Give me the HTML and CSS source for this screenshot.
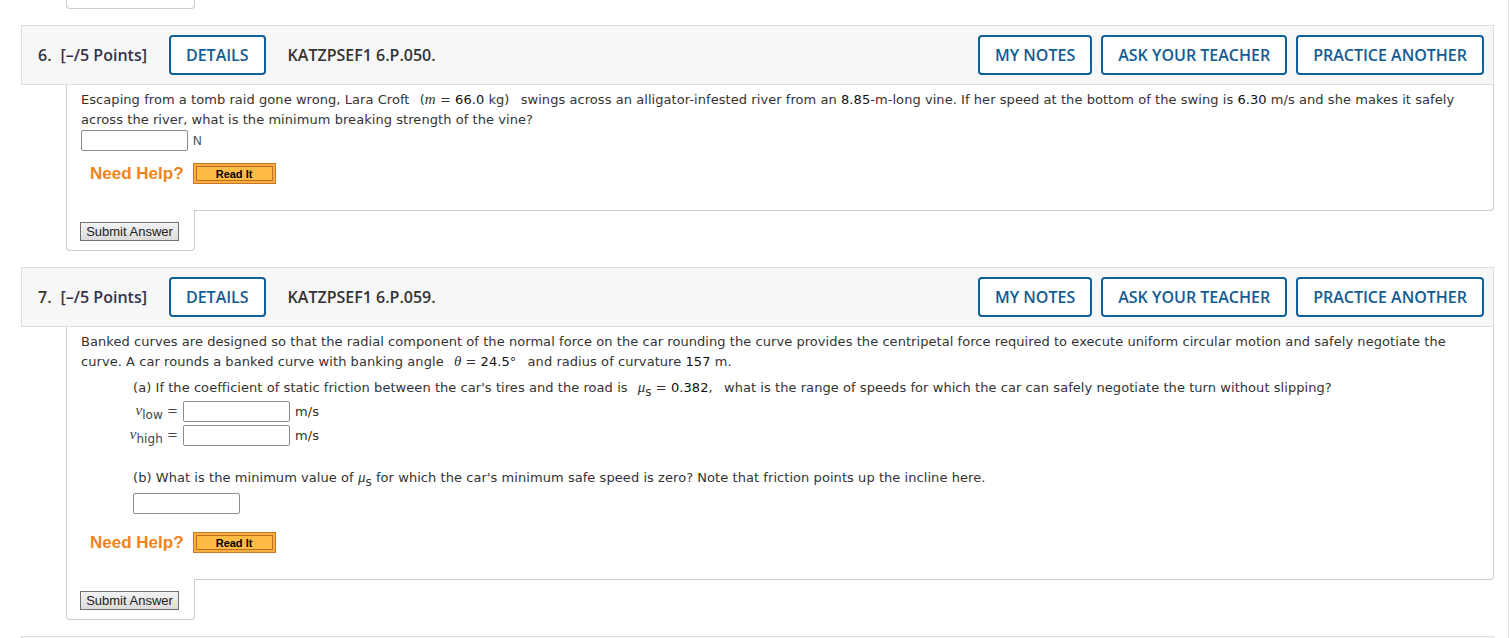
FILE: index.html
```html
<!DOCTYPE html>
<html lang="en">
<head>
<meta charset="utf-8">
<title>Questions</title>
<link rel="stylesheet" href="styles.css">
</head>
<body>
<div class="page">
  <div class="prev-tab"></div>

  <section class="question">
    <header class="q-head">
      <span class="q-num">6.</span>
      <span class="q-points">[–/5 Points]</span>
      <button class="q-btn q-details">DETAILS</button>
      <span class="q-code">KATZPSEF1 6.P.050.</span>
      <div class="q-actions">
        <button class="q-btn">MY NOTES</button>
        <button class="q-btn">ASK YOUR TEACHER</button>
        <button class="q-btn">PRACTICE ANOTHER</button>
      </div>
    </header>
    <div class="q-body">
      <p class="q-text">Escaping from a tomb raid gone wrong, Lara Croft <span class="math">(<span class="mi">m</span> = <span class="val">66.0</span> kg)</span> swings across an alligator-infested river from an <span class="val">8.85</span>-m-long vine. If her speed at the bottom of the swing is <span class="val">6.30</span> m/s and she makes it safely across the river, what is the minimum breaking strength of the vine?</p>
      <div class="answer-row">
        <input class="ans-box" type="text">
        <span class="unit-n">N</span>
      </div>
      <div class="help help-q6">
        <span class="help-label">Need Help?</span>
        <span class="read-it"><span class="read-it-inner">Read It</span></span>
      </div>
    </div>
    <div class="submit-tab"><button class="submit">Submit Answer</button></div>
  </section>

  <section class="question">
    <header class="q-head">
      <span class="q-num">7.</span>
      <span class="q-points">[–/5 Points]</span>
      <button class="q-btn q-details">DETAILS</button>
      <span class="q-code">KATZPSEF1 6.P.059.</span>
      <div class="q-actions">
        <button class="q-btn">MY NOTES</button>
        <button class="q-btn">ASK YOUR TEACHER</button>
        <button class="q-btn">PRACTICE ANOTHER</button>
      </div>
    </header>
    <div class="q-body">
      <p class="q-text">Banked curves are designed so that the radial component of the normal force on the car rounding the curve provides the centripetal force required to execute uniform circular motion and safely negotiate the curve. A car rounds a banked curve with banking angle <span class="math"><span class="mi">θ</span> = <span class="val">24.5</span>°</span> and radius of curvature <span class="val">157</span> m.</p>
      <div class="part">
        <p class="part-text">(a) If the coefficient of static friction between the car's tires and the road is <span class="math"><span class="mi">μ</span><sub class="sub">s</sub> = <span class="val">0.382</span>,</span> what is the range of speeds for which the car can safely negotiate the turn without slipping?</p>
        <div class="var-grid">
          <span class="var-label"><span class="mi">v</span><sub class="sub">low</sub> =</span>
          <input class="ans-box" type="text">
          <span class="unit">m/s</span>
          <span class="var-label"><span class="mi">v</span><sub class="sub">high</sub> =</span>
          <input class="ans-box" type="text">
          <span class="unit">m/s</span>
        </div>
      </div>
      <div class="part part-b">
        <p class="part-text">(b) What is the minimum value of <span class="mi">μ</span><sub class="sub">s</sub> for which the car's minimum safe speed is zero? Note that friction points up the incline here.</p>
        <input class="ans-box ans-b" type="text">
      </div>
      <div class="help help-q7">
        <span class="help-label">Need Help?</span>
        <span class="read-it"><span class="read-it-inner">Read It</span></span>
      </div>
    </div>
    <div class="submit-tab"><button class="submit">Submit Answer</button></div>
  </section>

  <section class="question">
    <header class="q-head q-head-next"></header>
  </section>
</div>
</body>
</html>
```

FILE: styles.css
```css
* { box-sizing: border-box; }

html, body {
  margin: 0;
  padding: 0;
  background: #ffffff;
}

body {
  font-family: "DejaVu Sans", Verdana, sans-serif;
  font-size: 13px;
  color: #333333;
  overflow: hidden;
}

.page {
  width: 1509px;
  height: 638px;
  border-right: 1px solid #e4e4e4;
  overflow: hidden;
}

.prev-tab {
  margin-left: 66px;
  width: 129px;
  height: 9px;
  border: 1px solid #cccccc;
  border-top: none;
  border-radius: 0 0 4px 4px;
}

.question {
  margin-top: 16px;
  margin-left: 21px;
  width: 1473px;
}

/* header bar */
.q-head {
  display: flex;
  align-items: center;
  height: 60px;
  padding: 9px 9px 9px 16px;
  background: #f7f7f7;
  border: 1px solid #dddddd;
  font-family: "Open Sans", "DejaVu Sans", sans-serif;
  font-size: 16px;
  font-weight: 600;
  color: #333333;
}

.q-num { margin-right: 9px; }

.q-points { color: #33334a; }

.q-code { margin-left: 22px; }

.q-details { margin-left: 22px; }

.q-actions {
  margin-left: auto;
  display: flex;
  gap: 9px;
}

.q-btn {
  height: 40px;
  padding: 0 15px;
  border: 2px solid #0f619b;
  border-radius: 4px;
  background: #ffffff;
  color: #135c92;
  font-family: "Open Sans", "DejaVu Sans", sans-serif;
  font-size: 16px;
  font-weight: 600;
  line-height: 36px;
}

/* body box */
.q-body {
  margin-left: 45px;
  padding: 5px 15px 26px 14px;
  border: 1px solid #cccccc;
  border-top: none;
  border-radius: 0 0 4px 0;
  letter-spacing: 0.06px;
}

.q-text, .part-text {
  margin: 0;
  line-height: 20px;
}

.val { color: #111111; }

.math { margin: 0 7px 0 6px; }

.mi {
  font-family: "Liberation Serif", "Times New Roman", serif;
  font-style: italic;
  font-size: 15px;
  line-height: 1;
  letter-spacing: 0;
}

.sub {
  font-size: 12px;
  line-height: 0;
  vertical-align: -4px;
}

.answer-row {
  display: flex;
  align-items: center;
  height: 21px;
}

.ans-box {
  width: 107px;
  height: 21px;
  margin: 0;
  padding: 0 3px;
  border: 1px solid #8d8d8d;
  border-radius: 2px;
  background: #ffffff;
  font: inherit;
}

.unit-n {
  margin-left: 5px;
  font-family: "Liberation Sans", Arial, sans-serif;
  font-size: 12px;
  color: #444444;
}

.unit { margin-left: 5px; }

.part {
  margin-left: 52px;
}

.part-text { margin-top: 6px; }

.var-grid {
  display: grid;
  grid-template-columns: 50px auto 1fr;
  grid-auto-rows: 24px;
  align-items: center;
  margin-top: 1px;
}

.var-label {
  justify-self: end;
  margin-right: 5px;
  white-space: nowrap;
  color: #444444;
  line-height: 20px;
}

.part-b .part-text { margin-top: 21px; }

.ans-b {
  display: block;
  margin-top: 5px;
}

/* help */
.help {
  display: flex;
  align-items: center;
  height: 21px;
  padding-left: 9px;
  letter-spacing: 0;
}

.help-q6 { margin-top: 12px; }
.help-q7 { margin-top: 18px; }

.help-label {
  font-family: "Liberation Sans", Arial, sans-serif;
  font-size: 17px;
  font-weight: bold;
  color: #f0841a;
  margin-right: 9px;
}

.read-it {
  display: inline-flex;
  width: 83px;
  height: 21px;
  padding: 2px;
  border: 1px solid #c8782a;
  background: #fcae3c;
}

.read-it-inner {
  flex: 1;
  display: flex;
  align-items: center;
  justify-content: center;
  border: 1px solid #b87028;
  background: #ffbb45;
  font-family: "Liberation Sans", Arial, sans-serif;
  font-size: 11px;
  font-weight: bold;
  color: #000000;
}

/* submit tab */
.submit-tab {
  position: relative;
  margin-left: 45px;
  margin-top: -1px;
  width: 129px;
  padding: 12px 0 9px 13px;
  background: #ffffff;
  border: 1px solid #cccccc;
  border-top: none;
  border-radius: 0 0 4px 4px;
}

.submit {
  display: block;
  width: 99px;
  height: 19px;
  padding: 0;
  border: 1px solid #707070;
  background: linear-gradient(#f2f2f2, #dcdcdc);
  font-family: "Liberation Sans", Arial, sans-serif;
  font-size: 13px;
  color: #222222;
  line-height: 17px;
}

.q-head-next {
  height: 60px;
}
```
